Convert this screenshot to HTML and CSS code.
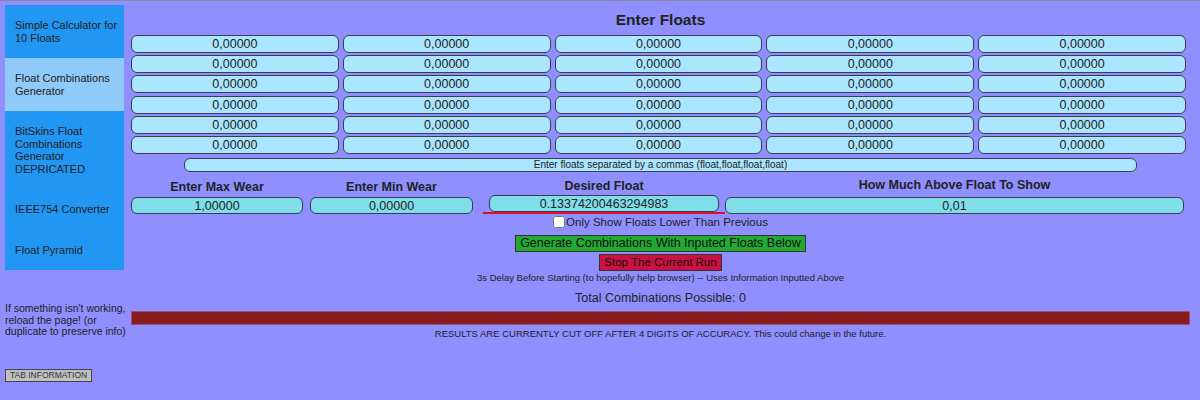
FILE: index.html
```html
<!DOCTYPE html>
<html lang="en">
<head>
    <meta charset="UTF-8">
    <title>Float Combinations Generator</title>
    <link rel="stylesheet" href="styles.css">
</head>
<body>
    <div class="page">
        <aside class="side">
            <nav class="tabs">
                <div class="tab">Simple Calculator for 10 Floats</div>
                <div class="tab active">Float Combinations Generator</div>
                <div class="tab">BitSkins Float Combinations Generator DEPRICATED</div>
                <div class="tab">IEEE754 Converter</div>
                <div class="tab">Float Pyramid</div>
            </nav>
            <p class="hint">If something isn't working, reload the page! (or duplicate to preserve info)</p>
            <button class="tab-info">TAB INFORMATION</button>
        </aside>

        <main class="main">
            <h1>Enter Floats</h1>
            <div class="floats" id="floats"></div>
            <input class="float-list" type="text" value="Enter floats separated by a commas (float,float,float,float)">

            <div class="settings">
                <div class="field f-max">
                    <label>Enter Max Wear</label>
                    <input class="wide" type="text" value="1,00000">
                </div>
                <div class="field f-min">
                    <label>Enter Min Wear</label>
                    <input class="wide" type="text" value="0,00000">
                </div>
                <div class="field f-desired">
                    <label>Desired Float</label>
                    <input class="wide" type="text" value="0.13374200463294983">
                </div>
                <div class="field f-above">
                    <label class="above">How Much Above Float To Show</label>
                    <input class="wide" type="text" value="0,01">
                </div>
            </div>

            <div class="check-row">
                <input type="checkbox" id="lower"><label for="lower">Only Show Floats Lower Than Previous</label>
            </div>

            <div class="actions">
                <button class="btn-go">Generate Combinations With Inputed Floats Below</button>
                <button class="btn-stop">Stop The Current Run</button>
                <p class="small">3s Delay Before Starting (to hopefully help browser) -- Uses Information Inputted Above</p>
            </div>

            <p class="total">Total Combinations Possible: 0</p>
            <div class="progress"></div>
            <p class="small note">RESULTS ARE CURRENTLY CUT OFF AFTER 4 DIGITS OF ACCURACY. This could change in the future.</p>
        </main>
    </div>

    <script>
        // 6 rows x 5 columns of float inputs
        const floats = document.getElementById('floats');
        for (let i = 0; i < 30; i++) {
            const input = document.createElement('input');
            input.type = 'text';
            input.value = '0,00000';
            floats.appendChild(input);
        }
    </script>
</body>
</html>
```

FILE: styles.css
```css
* {
    margin: 0;
    padding: 0;
    box-sizing: border-box;
}

body {
    font-family: 'Liberation Sans', Arial, sans-serif;
    background: #8f8fff;
    color: #222;
    border-top: 1px solid #8a8a9c;
    min-height: 100vh;
}

.page {
    display: flex;
    padding: 4px 10px 0 5px;
}

/* Sidebar */
.side {
    width: 119px;
    flex-shrink: 0;
}

.tab {
    background: #2196f3;
    font-size: 11px;
    line-height: 12.5px;
    padding: 14px 6px 14px 10px;
}

.tab.active {
    background: #90caf9;
}

.hint {
    width: 125px;
    margin-top: 33px;
    font-size: 10.5px;
    line-height: 11.5px;
}

.tab-info {
    margin-top: 31px;
    font-family: inherit;
    font-size: 8.5px;
    line-height: 11px;
    padding: 0 4px;
    background: #c0c0c0;
    color: #333;
    border: 1px solid #444;
}

/* Main column */
.main {
    flex: 1;
    margin-left: 7px;
    padding-top: 4px;
    text-align: center;
}

h1 {
    font-size: 15.5px;
    line-height: 22px;
    margin-bottom: 4px;
}

input[type="text"] {
    font-family: inherit;
    font-size: 12.5px;
    color: #222;
    text-align: center;
    background: #aae6ff;
    border: 1px solid #3c3c4c;
    border-radius: 6px;
    height: 18px;
    outline: none;
}

.floats {
    display: grid;
    grid-template-columns: repeat(5, 1fr);
    column-gap: 4px;
    row-gap: 2.2px;
    width: 1055px;
}

.floats input {
    width: 100%;
}

.float-list {
    display: block;
    width: 90% !important;
    margin: 4px auto 0;
    height: 14px !important;
    font-size: 10px !important;
}

.settings {
    display: flex;
    align-items: flex-end;
    margin-top: 6px;
}

.field label {
    display: block;
    font-weight: bold;
    font-size: 12.5px;
    line-height: 16px;
    margin-bottom: 1px;
}

.field label.above {
    line-height: 12px;
    margin-bottom: 5px;
}

.field .wide {
    width: 100%;
    height: 17px;
    background: #80deea;
}

.f-max { width: 172px; }
.f-min { width: 163px; margin-left: 7px; }
.f-above { width: 459px; }

.f-desired {
    width: 242px;
    margin-left: 10px;
    padding: 0 6px;
    border-bottom: 2px solid #e0102a;
}

.f-desired label {
    margin-bottom: -1px;
    line-height: 17px;
}

.check-row {
    display: flex;
    justify-content: center;
    align-items: center;
    height: 15px;
    font-size: 11.5px;
}

.check-row input {
    width: 12px;
    height: 12px;
    margin: 0 1px 0 0;
}

.actions {
    display: flex;
    flex-direction: column;
    align-items: center;
    margin-top: 6px;
}

.actions button {
    font-family: inherit;
    line-height: 15px;
    color: #111;
    border: 1px solid #333;
    padding: 0 4px;
}

.btn-go {
    font-size: 12.5px;
    background: #22aa33;
}

.btn-stop {
    font-size: 11.5px;
    background: #cc1040;
    margin-top: 2px;
}

.small {
    font-size: 9.5px;
    line-height: 12px;
    margin-top: 1px;
}

.total {
    font-size: 12.5px;
    line-height: 16px;
    margin-top: 6px;
}

.progress {
    height: 14px;
    margin-top: 5px;
    background: #861b1b;
    border: 1px solid #9d4d78;
}

.note {
    margin-top: 3px;
}
```
